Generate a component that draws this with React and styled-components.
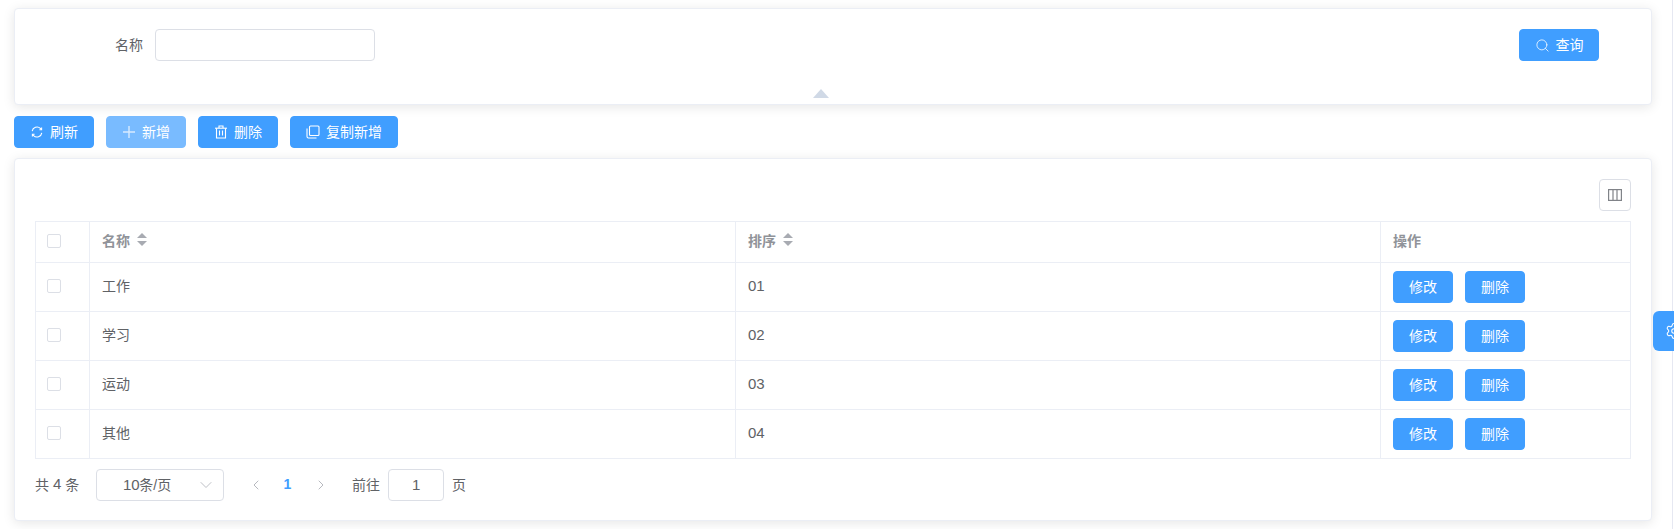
import React from "react"
import styled, { createGlobalStyle } from "styled-components"
import { Search, ChevronLeft, ChevronRight, ChevronDown, Settings } from "lucide-react"

const GlobalStyle = createGlobalStyle`
  html, body {
    margin: 0;
    padding: 0;
    background: #fff;
  }
  body {
    font-family: "Liberation Sans", "Noto Sans CJK SC", sans-serif;
    font-size: 14px;
    color: #606266;
    overflow: hidden;
  }
  * {
    box-sizing: border-box;
  }
`

const Page = styled.div`
  position: relative;
  width: 1674px;
  height: 529px;
  padding: 8px 22px 0 14px;
  overflow: hidden;
`

const Card = styled.div`
  background: #fff;
  border: 1px solid #ebeef5;
  border-radius: 4px;
  box-shadow: 0 2px 12px 0 rgba(0, 0, 0, 0.1);
`

const SearchCard = styled(Card)`
  position: relative;
  height: 97px;
  padding: 20px 52px 0 100px;
  display: flex;
  justify-content: space-between;
  align-items: flex-start;
`

const Field = styled.div`
  display: flex;
  align-items: center;
  gap: 12px;
`

const FieldLabel = styled.label`
  line-height: 32px;
`

const TextInput = styled.div`
  width: 220px;
  height: 32px;
  border: 1px solid #dcdfe6;
  border-radius: 4px;
  background: #fff;
`

const CollapseArrow = styled.div`
  position: absolute;
  left: 798px;
  bottom: 6px;
  width: 0;
  height: 0;
  border-left: 8px solid transparent;
  border-right: 8px solid transparent;
  border-bottom: 9px solid #d0d9e6;
`

const Toolbar = styled.div`
  display: flex;
  gap: 12px;
  margin: 11px 0 10px;
`

const Button = styled.button`
  display: inline-flex;
  align-items: center;
  justify-content: center;
  gap: 6px;
  height: 32px;
  padding: 0;
  width: ${(p) => p.$width || 80}px;
  border: 1px solid ${(p) => (p.$disabled ? "#79bbff" : "#409eff")};
  border-radius: 4px;
  background: ${(p) => (p.$disabled ? "#79bbff" : "#409eff")};
  color: #fff;
  font-family: inherit;
  font-size: 14px;
  line-height: 1;
`

const TableCard = styled(Card)`
  height: 363px;
  padding: 20px 20px 0;
`

const TableTools = styled.div`
  display: flex;
  justify-content: flex-end;
  margin-bottom: 10px;
`

const ColumnsButton = styled.div`
  display: flex;
  align-items: center;
  justify-content: center;
  width: 32px;
  height: 32px;
  border: 1px solid #dcdfe6;
  border-radius: 4px;
  color: #808388;
`

const Table = styled.div`
  width: 1596px;
  border-top: 1px solid #ebeef5;
  border-left: 1px solid #ebeef5;
`

const Row = styled.div`
  display: grid;
  grid-template-columns: 54px 646px 645px 250px;
  height: ${(p) => (p.$head ? 41 : 49)}px;
`

const Cell = styled.div`
  display: flex;
  align-items: center;
  padding: 0 12px 5px;
  border-right: 1px solid #ebeef5;
  border-bottom: 1px solid #ebeef5;
  color: ${(p) => (p.$head ? "#909399" : "#606266")};
  font-weight: ${(p) => (p.$head ? 700 : 400)};
`

const NumberCell = styled(Cell)`
  padding-bottom: 3px;
`

const CheckCell = styled(Cell)`
  padding: 0 0 2px 11px;
`

const ActionCell = styled(Cell)`
  gap: 12px;
  padding: 0 12px;
`

const HeadLabel = styled.span`
  display: inline-flex;
  align-items: center;
  gap: 7px;
`

const Checkbox = styled.span`
  width: 14px;
  height: 14px;
  border: 1px solid #dcdfe6;
  border-radius: 2px;
  background: #fff;
`

const SmallButton = styled(Button)`
  width: 60px;
`

const Num = styled.span`
  font-size: 15px;
  letter-spacing: -0.2px;
`

const Pager = styled.div`
  display: flex;
  align-items: center;
  height: 32px;
  margin-top: 10px;
`

const Total = styled.span`
  display: inline-flex;
  align-items: center;
  gap: 4px;
  width: 61px;
  padding-bottom: 3px;
`

const PageSelect = styled.div`
  display: flex;
  align-items: center;
  justify-content: space-between;
  width: 128px;
  height: 32px;
  padding: 0 7px 0 26px;
  border: 1px solid #dcdfe6;
  border-radius: 4px;
  color: #606266;

  span {
    padding-bottom: 3px;
  }
`

const PageNav = styled.div`
  display: flex;
  align-items: center;
  justify-content: space-between;
  width: 95px;
  margin: 0 17px 0 16px;
  padding: 0 6px 0 8px;
  color: #a8abb2;
`

const CurrentPage = styled.span`
  color: #409eff;
  font-weight: 700;
  padding-bottom: 2px;
  margin-right: 2px;
`

const Jump = styled.div`
  display: flex;
  align-items: center;
  gap: 8px;
`

const JumpText = styled.span`
  padding-bottom: 3px;
`

const JumpInput = styled.div`
  display: flex;
  align-items: center;
  justify-content: center;
  width: 56px;
  height: 32px;
  padding-bottom: 2px;
  border: 1px solid #dcdfe6;
  border-radius: 4px;
`

const PageEdge = styled.div`
  position: absolute;
  right: 1px;
  top: 0;
  width: 1px;
  height: 100%;
  background: #e6e8f2;
`

const SideTab = styled.div`
  position: absolute;
  right: 0;
  top: 311px;
  display: flex;
  align-items: center;
  width: 21px;
  height: 40px;
  padding-left: 12px;
  border-radius: 6px 0 0 6px;
  background: #409eff;
  color: #fff;
  overflow: hidden;

  svg {
    flex: none;
  }
`

const SortIcon = () => (
  <svg width="10" height="13" viewBox="0 0 10 13">
    <path d="M5 0 L10 5 L0 5 Z" fill="#a8abb2" />
    <path d="M0 8 L10 8 L5 13 Z" fill="#a8abb2" />
  </svg>
)

const iconProps = {
  width: 14,
  height: 14,
  viewBox: "0 0 14 14",
  fill: "none",
  stroke: "currentColor",
  strokeWidth: 1.1,
}

const RefreshIcon = () => (
  <svg {...iconProps}>
    <path d="M2.2 6.2A4.9 4.9 0 0 1 10.4 3.4L11.4 4.6" />
    <path d="M11.8 7.8A4.9 4.9 0 0 1 3.6 10.6L2.6 9.4" />
    <path d="M11.6 2.6V4.8H9.4" />
    <path d="M2.4 11.4V9.2H4.6" />
  </svg>
)

const PlusIcon = () => (
  <svg {...iconProps} width={14} height={14} strokeWidth={1.4} opacity={0.7}>
    <path d="M1 7H13M7 1V13" />
  </svg>
)

const TrashIcon = () => (
  <svg {...iconProps}>
    <path d="M1 3.2H13" />
    <path d="M5 3V1H9V3" />
    <path d="M2.5 3.2V13H11.5V3.2" />
    <path d="M5.5 5.5V10.5M8.5 5.5V10.5" />
  </svg>
)

const CopyIcon = () => (
  <svg {...iconProps}>
    <rect x="3.5" y="1" width="9.5" height="9.5" rx="1" />
    <path d="M1 3.5V11.5A1.5 1.5 0 0 0 2.5 13H10.5" />
  </svg>
)

const ColumnsIcon = () => (
  <svg width="14" height="12" viewBox="0 0 14 12" fill="none" stroke="currentColor" strokeWidth="1.2">
    <rect x="0.6" y="0.6" width="12.8" height="10.8" />
    <path d="M5 0.6V11.4M9 0.6V11.4" />
  </svg>
)

const rows = [
  { name: "工作", order: "01" },
  { name: "学习", order: "02" },
  { name: "运动", order: "03" },
  { name: "其他", order: "04" },
]

const toolbarButtons = [
  { label: "刷新", Icon: RefreshIcon },
  { label: "新增", Icon: PlusIcon, disabled: true },
  { label: "删除", Icon: TrashIcon },
  { label: "复制新增", Icon: CopyIcon, width: 108 },
]

const App = () => {
  return (
    <Page>
      <GlobalStyle />
      <SearchCard>
        <Field>
          <FieldLabel>名称</FieldLabel>
          <TextInput />
        </Field>
        <Button>
          <Search size={15} strokeWidth={1.25} />
          查询
        </Button>
        <CollapseArrow />
      </SearchCard>

      <Toolbar>
        {toolbarButtons.map(({ label, Icon, disabled, width }) => (
          <Button key={label} $disabled={disabled} $width={width}>
            <Icon />
            {label}
          </Button>
        ))}
      </Toolbar>

      <TableCard>
        <TableTools>
          <ColumnsButton>
            <ColumnsIcon />
          </ColumnsButton>
        </TableTools>
        <Table>
          <Row $head>
            <CheckCell>
              <Checkbox />
            </CheckCell>
            <Cell $head>
              <HeadLabel>
                名称 <SortIcon />
              </HeadLabel>
            </Cell>
            <Cell $head>
              <HeadLabel>
                排序 <SortIcon />
              </HeadLabel>
            </Cell>
            <Cell $head>操作</Cell>
          </Row>
          {rows.map((row) => (
            <Row key={row.order}>
              <CheckCell>
                <Checkbox />
              </CheckCell>
              <Cell>{row.name}</Cell>
              <NumberCell>
                <Num>{row.order}</Num>
              </NumberCell>
              <ActionCell>
                <SmallButton>修改</SmallButton>
                <SmallButton>删除</SmallButton>
              </ActionCell>
            </Row>
          ))}
        </Table>
        <Pager>
          <Total>
            共<Num>4</Num>条
          </Total>
          <PageSelect>
            <span>
              <Num>10</Num>条/页
            </span>
            <ChevronDown size={20} strokeWidth={0.9} color="#a8abb2" />
          </PageSelect>
          <PageNav>
            <ChevronLeft size={16} strokeWidth={1.25} />
            <CurrentPage>1</CurrentPage>
            <ChevronRight size={16} strokeWidth={1.25} />
          </PageNav>
          <Jump>
            <JumpText>前往</JumpText>
            <JumpInput>
              <Num>1</Num>
            </JumpInput>
            <JumpText>页</JumpText>
          </Jump>
        </Pager>
      </TableCard>

      <PageEdge />
      <SideTab>
        <Settings size={18} strokeWidth={1.4} />
      </SideTab>
    </Page>
  )
}

export default App
